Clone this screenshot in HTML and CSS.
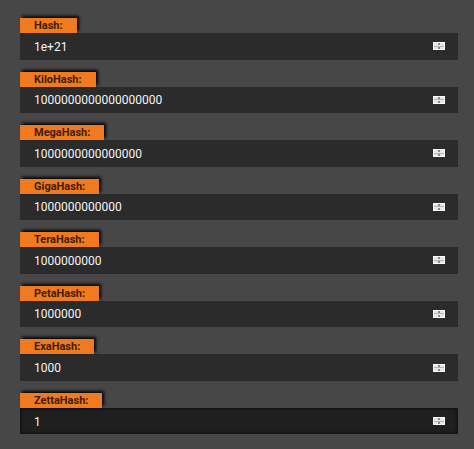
FILE: index.html
```html
<!DOCTYPE html>
<html>
<head>
<meta charset="utf-8">
<link rel="stylesheet" href="styles.css">
</head>
<body>
<div class="panel">
  <div class="field"><span class="label">Hash:</span><div class="input"><span class="value">1e+21</span><span class="spin"><i></i></span></div></div>
  <div class="field"><span class="label">KiloHash:</span><div class="input"><span class="value">1000000000000000000</span><span class="spin"><i></i></span></div></div>
  <div class="field"><span class="label">MegaHash:</span><div class="input"><span class="value">1000000000000000</span><span class="spin"><i></i></span></div></div>
  <div class="field"><span class="label">GigaHash:</span><div class="input"><span class="value">1000000000000</span><span class="spin"><i></i></span></div></div>
  <div class="field"><span class="label">TeraHash:</span><div class="input"><span class="value">1000000000</span><span class="spin"><i></i></span></div></div>
  <div class="field"><span class="label">PetaHash:</span><div class="input"><span class="value">1000000</span><span class="spin"><i></i></span></div></div>
  <div class="field"><span class="label">ExaHash:</span><div class="input"><span class="value">1000</span><span class="spin"><i></i></span></div></div>
  <div class="field"><span class="label">ZettaHash:</span><div class="input focused"><span class="value">1</span><span class="spin"><i></i></span></div></div>
</div>
</body>
</html>
```
FILE: styles.css
```css
html, body {
  margin: 0;
  padding: 0;
  background: #474747;
  width: 474px;
  height: 449px;
  overflow: hidden;
}
.panel {
  display: flex;
  flex-direction: column;
  gap: 12.05px;
  padding: 18px 16px 0 20px;
  font-family: Roboto, "Liberation Sans", sans-serif;
}
.field {
  display: flex;
  flex-direction: column;
  align-items: flex-start;
}
.label {
  display: block;
  height: 15px;
  line-height: 16px;
  padding: 0 14px;
  background: #f07a1f;
  color: #3d1d05;
  font-size: 11px;
  font-weight: 700;
  box-shadow: 2px -2px 3px rgba(0, 0, 0, 0.95);
  position: relative;
  z-index: 1;
}
.input {
  box-sizing: border-box;
  width: 438px;
  height: 26.5px;
  background: #2b2b2b;
  display: flex;
  align-items: center;
  justify-content: space-between;
  padding: 0 13px 0 14px;
}
.input.focused {
  background: #1f1f1f;
  border: 1px solid #141414;
  box-shadow: inset 0 0 3px rgba(0,0,0,0.6);
  padding-left: 13px;
  padding-right: 12px;
}
.value {
  color: #f5f5f5;
  font-size: 12px;
  padding-top: 1px;
}
.spin {
  width: 12px;
  height: 8px;
  background: #e6e6e6;
  border: 1px solid #fafafa;
  box-sizing: border-box;
  position: relative;
}
.spin i {
  position: absolute;
  left: 4px;
  top: 0;
  width: 2px;
  height: 6px;
  background: linear-gradient(#8a8a8a 0 2px, transparent 2px 4px, #8a8a8a 4px 6px);
}
.spin::after {
  content: "";
  position: absolute;
  left: 0;
  right: 0;
  top: 2.5px;
  height: 1px;
  background: #b5b5b5;
}
```
